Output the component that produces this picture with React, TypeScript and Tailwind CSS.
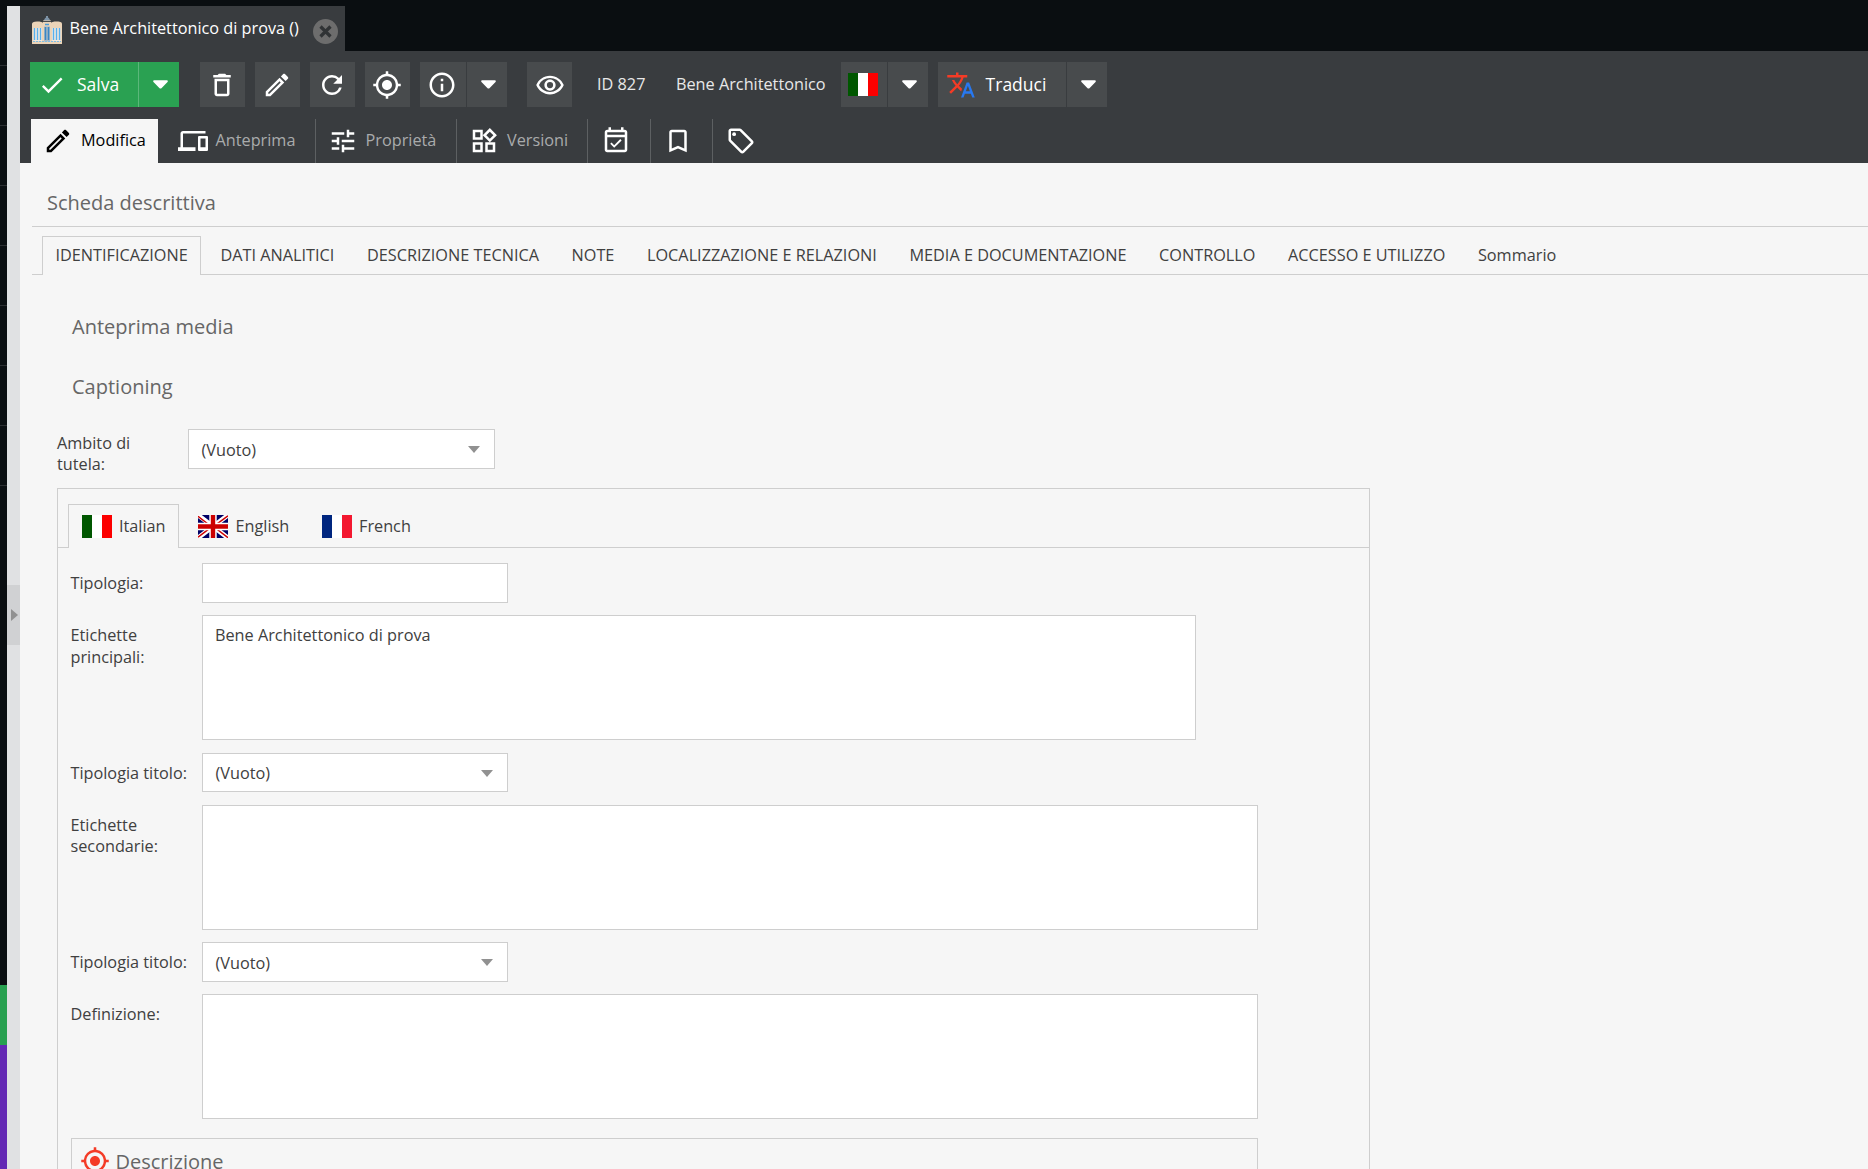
import type { ReactNode } from "react";
import {
  MdBookmarkBorder,
  MdCheck,
  MdDeleteOutline,
  MdDevices,
  MdGpsFixed,
  MdInfoOutline,
  MdOutlineEdit,
  MdOutlineEventAvailable,
  MdOutlineLocalOffer,
  MdOutlineRemoveRedEye,
  MdOutlineWidgets,
  MdRefresh,
  MdTune,
} from "react-icons/md";

const navSlots = ["a", "b", "c", "d", "e", "f", "g", "h"];

const sections = [
  "DATI ANALITICI",
  "DESCRIZIONE TECNICA",
  "NOTE",
  "LOCALIZZAZIONE E RELAZIONI",
  "MEDIA E DOCUMENTAZIONE",
  "CONTROLLO",
  "ACCESSO E UTILIZZO",
  "Sommario",
];

function Caret({ className = "" }: { className?: string }) {
  return (
    <svg viewBox="0 0 16 9" className={`shrink-0 ${className}`}>
      <path d="M1.2 0h13.6c1 0 1.4 1 .7 1.7L9 8.4c-.6.6-1.4.6-2 0L.5 1.7C-.2 1 .2 0 1.2 0z" fill="currentColor" />
    </svg>
  );
}

function ToolButton({ children, className = "w-[45px]" }: { children: ReactNode; className?: string }) {
  return (
    <button className={`flex h-[45px] shrink-0 items-center justify-center bg-[#484b4d] text-white ${className}`}>
      {children}
    </button>
  );
}

function MenuArrow() {
  return (
    <ToolButton className="ml-px w-10 pl-[3px]">
      <Caret className="h-[9px] w-[15px]" />
    </ToolButton>
  );
}

function FlagItaly() {
  return (
    <div className="flex h-[23px] w-[30px] shrink-0">
      <div className="flex-1 bg-[#005700]" />
      <div className="flex-1 bg-white" />
      <div className="flex-1 bg-[#fc0000]" />
    </div>
  );
}

function FlagFrance() {
  return (
    <div className="flex h-[23px] w-[30px] shrink-0">
      <div className="flex-1 bg-[#00267f]" />
      <div className="flex-1 bg-white" />
      <div className="flex-1 bg-[#f31830]" />
    </div>
  );
}

function FlagUK() {
  return (
    <svg viewBox="0 0 30 23" className="h-[23px] w-[30px] shrink-0">
      <rect width="30" height="23" fill="#006" />
      <path d="M0 0l30 23M30 0L0 23" stroke="#fff" strokeWidth="4.6" />
      <path d="M0 1.3l12 9.2M30 .8L18 9.7M0 22.2l12-9M30 22.7l-12-9.2" stroke="#c00" strokeWidth="1.5" />
      <path d="M15 0v23M0 11.5h30" stroke="#fff" strokeWidth="7.4" />
      <path d="M15 0v23M0 11.5h30" stroke="#c00" strokeWidth="4.4" />
    </svg>
  );
}

function BuildingIcon() {
  return (
    <svg viewBox="0 0 30 28" className="h-7 w-[30px] shrink-0">
      {/* dome */}
      <path d="M12 5c0-2 1-3 2-3.500V0h2v1.500c1 .5 2 1.500 2 3.500z" fill="#7d93a6" />
      <path d="M0 8c0-1.500 1.500-2.500 5-2.500s5.500 .5 6 1.500V4.500h8V7c.5-1 2-1.500 6-1.500s5 1 5 2.500v20H0z" fill="#ecd4b8" />
      <path d="M11 5.500h8" stroke="#4a4d50" strokeWidth="1" />
      <path d="M1.500 12h8.500v13H1.500zM20 12h8.500v13H20z" fill="#f3e9de" />
      <path d="M12 10.500h6v15h-6z" fill="#a9b9c6" />
      <path d="M2.500 12v12M5.500 12v12M8.500 12v12M21.500 12v12M24.500 12v12M27.500 12v12" stroke="#58b0ee" strokeWidth="1.4" />
      <path d="M13.500 11v13M16.500 11v13" stroke="#3b86c4" strokeWidth="1.5" />
      <path d="M13 8.500h4" stroke="#4c9bd6" strokeWidth="1.5" />
      <path d="M1 25.500h28" stroke="#7cbde6" strokeWidth="1" strokeDasharray="2 1" />
    </svg>
  );
}

function Select({ value, className = "h-10 w-[306px]" }: { value: string; className?: string }) {
  return (
    <div className={`flex items-center justify-between border border-[#cecece] bg-white pr-[14px] pl-[12.5px] ${className}`}>
      <span className="pt-[3px]">{value}</span>
      <svg viewBox="0 0 12 7" className="h-[7px] w-3">
        <path d="M0 0h12L6 7z" fill="#919191" />
      </svg>
    </div>
  );
}

function Field({ label, className = "", children }: { label: string; className?: string; children: ReactNode }) {
  return (
    <div className={`flex shrink-0 ${className}`}>
      <div className="w-[132px] shrink-0 pt-[10px] pr-8 pl-[0.5px] leading-[21.5px]">{label}</div>
      {children}
    </div>
  );
}

function TextArea({ value = "", className = "w-[1056px]" }: { value?: string; className?: string }) {
  return <div className={`h-[125px] border border-[#cecece] bg-white px-3 py-2 leading-[22px] ${className}`}>{value}</div>;
}

export default function App() {
  return (
    <div className="flex h-[1169px] w-[1868px] overflow-hidden bg-[#0a0e11] pt-1.5 font-['Open_Sans','Noto_Sans',sans-serif] text-[16.25px] whitespace-nowrap text-[#404040]">
      {/* Collapsed navigation */}
      <div className="flex w-[7px] shrink-0 flex-col">
        {navSlots.map((slot) => (
          <div key={slot} className="h-[60px] shrink-0 border-b border-[#2b2e31]" />
        ))}
        <div className="mt-auto h-[60px] bg-[#28a050]" />
        <div className="h-[124px] bg-[#6428b4]" />
      </div>

      <div className="flex w-[13px] shrink-0 flex-col bg-[#e0e1e3] pt-[579px]">
        <div className="flex h-[60px] items-center justify-center bg-[#d0d1d3] pl-px">
          <svg viewBox="0 0 7 12" className="h-3 w-[7px]">
            <path d="M0 0l7 6-7 6z" fill="#919191" />
          </svg>
        </div>
      </div>

      <div className="flex min-w-0 flex-1 flex-col">
        {/* Open document tab */}
        <div className="flex h-[45px] shrink-0">
          <div className="flex w-[325px] bg-[#393c3f] pl-3 text-white">
            <div className="pt-[10px]">
              <BuildingIcon />
            </div>
            <span className="w-[251px] shrink-0 pt-[10px] pl-[7.5px] leading-6">Bene Architettonico di prova ()</span>
            <svg viewBox="0 0 25 25" className="mt-[13px] h-[25px] w-[25px] shrink-0">
              <circle cx="12.5" cy="12.5" r="12.5" fill="#6d6d6d" />
              <path d="M7.500 7.500l10 10M17.500 7.500l-10 10" stroke="#303335" strokeWidth="3.2" />
            </svg>
          </div>
        </div>

        {/* Toolbar */}
        <div className="flex h-[68px] shrink-0 bg-[#393c3f] pt-[11px] pl-[10px] text-white">
          <button className="flex h-[45px] w-[108px] items-center bg-[#2aa152] pl-2 text-[17.5px]">
            <MdCheck className="h-7 w-7" />
            <span className="pl-[11px]">Salva</span>
          </button>
          <button className="flex h-[45px] w-[41px] items-center justify-center border-l border-[#5bb77a] bg-[#2aa152] pl-[3px]">
            <Caret className="h-[9px] w-[15px]" />
          </button>
          <div className="flex gap-[10px] pl-[21px]">
            <ToolButton className="w-[45px] pr-px">
              <MdDeleteOutline className="h-[30px] w-[30px]" />
            </ToolButton>
            <ToolButton className="w-[45px] pr-px">
              <MdOutlineEdit className="h-[30px] w-[30px]" />
            </ToolButton>
            <ToolButton className="w-[45px] pr-px">
              <MdRefresh className="h-[30px] w-[30px]" />
            </ToolButton>
            <ToolButton className="w-[45px] pr-px">
              <MdGpsFixed className="h-[30px] w-[30px]" />
            </ToolButton>
            <div className="flex">
              <ToolButton className="w-[46px] pr-0.5">
                <MdInfoOutline className="h-[30px] w-[30px]" />
              </ToolButton>
              <MenuArrow />
            </div>
          </div>
          <ToolButton className="ml-5 w-[45px]">
            <MdOutlineRemoveRedEye className="h-[30px] w-[30px]" />
          </ToolButton>
          <span className="ml-[25px] w-[79px] leading-[45px] text-[#e8e8e8]">ID 827</span>
          <span className="w-[165px] leading-[45px] text-[#e8e8e8]">Bene Architettonico</span>
          <ToolButton className="w-[46px] pr-0.5">
            <FlagItaly />
          </ToolButton>
          <MenuArrow />
          <ToolButton className="ml-[10px] w-[128px] pr-3 text-[17.5px]">
            <svg viewBox="0 0 24 24" className="mr-[10px] h-[30px] w-[30px]">
              <path
                d="M12.870 15.070l-2.540-2.510.030-.030c1.740-1.940 2.980-4.170 3.710-6.530H17V4h-7V2H8v2H1v1.990h11.170C11.500 7.920 10.440 9.750 9 11.350 8.070 10.320 7.300 9.190 6.690 8h-2c.730 1.630 1.730 3.170 2.980 4.560l-5.090 5.020L4 19l5-5 3.110 3.110.760-2.040z"
                fill="#f43b26"
              />
              <path d="M18.500 10h-2L12 22h2l1.120-3h4.750L21 22h2l-4.500-12zm-2.620 7l1.620-4.330L19.120 17h-3.240z" fill="#2878f0" />
            </svg>
            Traduci
          </ToolButton>
          <ToolButton className="ml-px w-10 pl-0.5">
            <Caret className="h-[9px] w-[15px]" />
          </ToolButton>
        </div>

        {/* Views */}
        <div className="flex h-[44px] shrink-0 bg-[#393c3f] pl-[11px] text-[#a9abac]">
          <div className="flex w-[127px] items-center bg-[#f6f6f6] pl-3 text-black">
            <MdOutlineEdit className="h-[30px] w-[30px]" />
            <span className="pb-px pl-2">Modifica</span>
          </div>
          <div className="flex w-[158px] items-center border-r border-[#5d6062] pl-[20px]">
            <MdDevices className="h-[30px] w-[30px] text-white" />
            <span className="pb-px pl-[7.5px]">Anteprima</span>
          </div>
          <div className="flex w-[141px] items-center border-r border-[#5d6062] pl-3">
            <MdTune className="h-[30px] w-[30px] text-white" />
            <span className="pb-px pl-[7.5px]">Proprietà</span>
          </div>
          <div className="flex w-[131px] items-center border-r border-[#5d6062] pl-3">
            <MdOutlineWidgets className="h-[30px] w-[30px] text-white" />
            <span className="pb-px pl-2">Versioni</span>
          </div>
          <div className="flex w-[63px] items-center border-r border-[#5d6062] pl-[13px]">
            <MdOutlineEventAvailable className="h-[30px] w-[30px] text-white" />
          </div>
          <div className="flex w-[62px] items-center border-r border-[#5d6062] pl-3">
            <MdBookmarkBorder className="h-[30px] w-[30px] text-white" />
          </div>
          <div className="flex items-center pl-[13px]">
            <MdOutlineLocalOffer className="h-[30px] w-[30px] text-white" />
          </div>
        </div>

        <div className="flex min-h-0 flex-1 flex-col bg-[#f6f6f6] pl-3">
          <h1 className="h-[64px] shrink-0 border-b border-[#cecece] pt-[25px] pl-[15px] text-[20px] leading-[30px] text-[#666]">
            Scheda descrittiva
          </h1>

          <div className="mt-[9px] flex h-[39px] shrink-0">
            <div className="w-[10px] border-b border-[#cecece]" />
            <div className="w-[159px] border border-b-0 border-[#cecece] pl-[12.5px] leading-[37px]">IDENTIFICAZIONE</div>
            <div className="flex flex-1 gap-[32.6px] border-b border-[#cecece] pl-[19.5px] leading-[39px]">
              {sections.map((name) => (
                <span key={name}>{name}</span>
              ))}
            </div>
          </div>

          <h2 className="pt-[37px] pl-10 text-[20px] leading-[30px] text-[#666]">Anteprima media</h2>
          <h2 className="pt-[30px] pl-10 text-[20px] leading-[30px] text-[#666]">Captioning</h2>

          <div className="mt-[27px] flex h-[59px] shrink-0 pl-[25px]">
            <div className="w-[131px] pt-1 leading-[21px]">
              Ambito di
              <br />
              tutela:
            </div>
            <Select value="(Vuoto)" className="h-10 w-[307px]" />
          </div>

          <div className="ml-[25px] flex min-h-0 w-[1313px] flex-1 flex-col border border-b-0 border-[#cecece]">
            {/* Languages */}
            <div className="mt-[15px] flex h-11 shrink-0">
              <div className="w-[10px] border-b border-[#cecece]" />
              <div className="flex w-[111px] items-center border border-b-0 border-[#cecece] pl-[13px]">
                <FlagItaly />
                <span className="pl-[7px]">Italian</span>
              </div>
              <div className="flex flex-1 items-center border-b border-[#cecece] pt-px pl-[19px]">
                <FlagUK />
                <span className="w-[94px] pl-[7.5px]">English</span>
                <FlagFrance />
                <span className="pl-[7px]">French</span>
              </div>
            </div>

            <div className="flex min-h-0 flex-1 flex-col pt-[15px] pl-3">
              <Field label="Tipologia:">
                <div className="h-10 w-[306px] border border-[#cecece] bg-white" />
              </Field>
              <Field label="Etichette principali:" className="mt-3 [&>*:first-child]:whitespace-normal">
                <TextArea value="Bene Architettonico di prova" className="w-[994px]" />
              </Field>
              <Field label="Tipologia titolo:" className="mt-[13px] [&>*:first-child]:pr-0">
                <Select value="(Vuoto)" className="h-[39px] w-[306px] [&>span]:pt-0.5 [&>svg]:mt-px" />
              </Field>
              <Field
                label="Etichette secondarie:"
                className="mt-[13px] [&>*:first-child]:leading-[21px] [&>*:first-child]:whitespace-normal"
              >
                <TextArea />
              </Field>
              <Field label="Tipologia titolo:" className="mt-3 [&>*:first-child]:pr-0">
                <Select value="(Vuoto)" />
              </Field>
              <Field label="Definizione:" className="mt-3">
                <TextArea />
              </Field>
              <div className="mt-[19px] ml-px flex h-[31px] w-[1187px] shrink-0 border border-b-0 border-[#cecece] pt-[7px] pl-2 text-[20px] text-[#666]">
                <MdGpsFixed className="h-[30px] w-[30px] shrink-0 text-[#f43b26]" />
                <span className="pl-[5.5px] leading-[32px]">Descrizione</span>
              </div>
            </div>
          </div>
        </div>
      </div>
    </div>
  );
}
